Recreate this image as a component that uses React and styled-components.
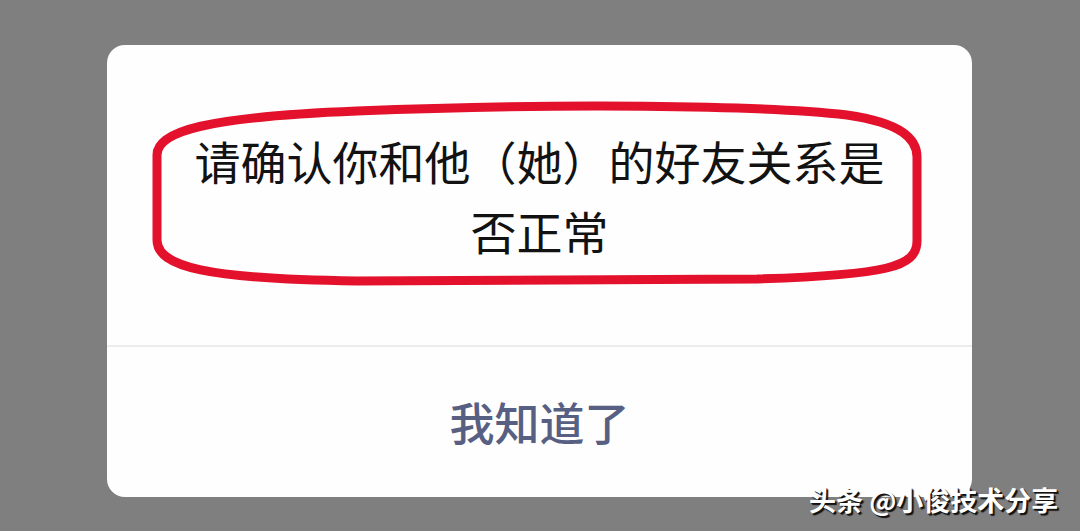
import styled, { createGlobalStyle } from "styled-components";

const Global = createGlobalStyle`
    html, body {
        margin: 0;
        padding: 0;
        background-color: #7f7f7f;
        font-family: "Noto Sans CJK SC", "Noto Sans", sans-serif;
    }
`

export default function App(){

    return(
        <Screen>
            <Global />
            <Dialog>
                <Message>
                    <Text>请确认你和他（她）的好友关系是否正常</Text>
                    <Circle viewBox="0 0 865 452" width="865" height="452">
                        <path
                            d="M 50 195 L 50 110 C 50 86, 100 72, 250 66 C 450 58, 650 60, 740 70 C 795 78, 810 94, 810 112 L 810 196 C 810 222, 780 230, 650 234 L 250 236 C 100 234, 50 222, 50 195 Z"
                            fill="none"
                            stroke="#e3112b"
                            strokeWidth="9"
                        />
                    </Circle>
                </Message>
                <Button>我知道了</Button>
            </Dialog>
            <Watermark>头条 @小俊技术分享</Watermark>
        </Screen>
    )
}

const Screen = styled.div`
    width: 1080px;
    height: 531px;
    position: relative;
    overflow: hidden;
    padding-top: 45px;
    padding-left: 107px;
    box-sizing: border-box;
`

const Dialog = styled.div`
    width: 865px;
    height: 452px;
    background-color: #fefefe;
    border-radius: 18px;
    display: flex;
    flex-direction: column;
    position: relative;
`

const Message = styled.div`
    height: 302px;
    box-sizing: border-box;
    padding-top: 80px;
    display: flex;
    justify-content: center;
    border-bottom: 2px solid #ececee;
`

const Text = styled.p`
    margin: 0;
    width: 700px;
    text-align: center;
    font-size: 46px;
    line-height: 70px;
    color: #121212;
`

const Circle = styled.svg`
    position: absolute;
    left: 0;
    top: 0;
    pointer-events: none;
`

const Button = styled.div`
    flex: 1;
    display: flex;
    align-items: center;
    justify-content: center;
    font-size: 45px;
    font-weight: 500;
    color: #576082;
    padding-bottom: 2px;
`

const Watermark = styled.div`
    position: absolute;
    left: 809px;
    top: 480px;
    font-size: 27px;
    font-weight: 700;
    color: #ffffff;
    white-space: nowrap;
    text-shadow: 2px 2px 1px #111, 1px 1px 0 #333;
`
